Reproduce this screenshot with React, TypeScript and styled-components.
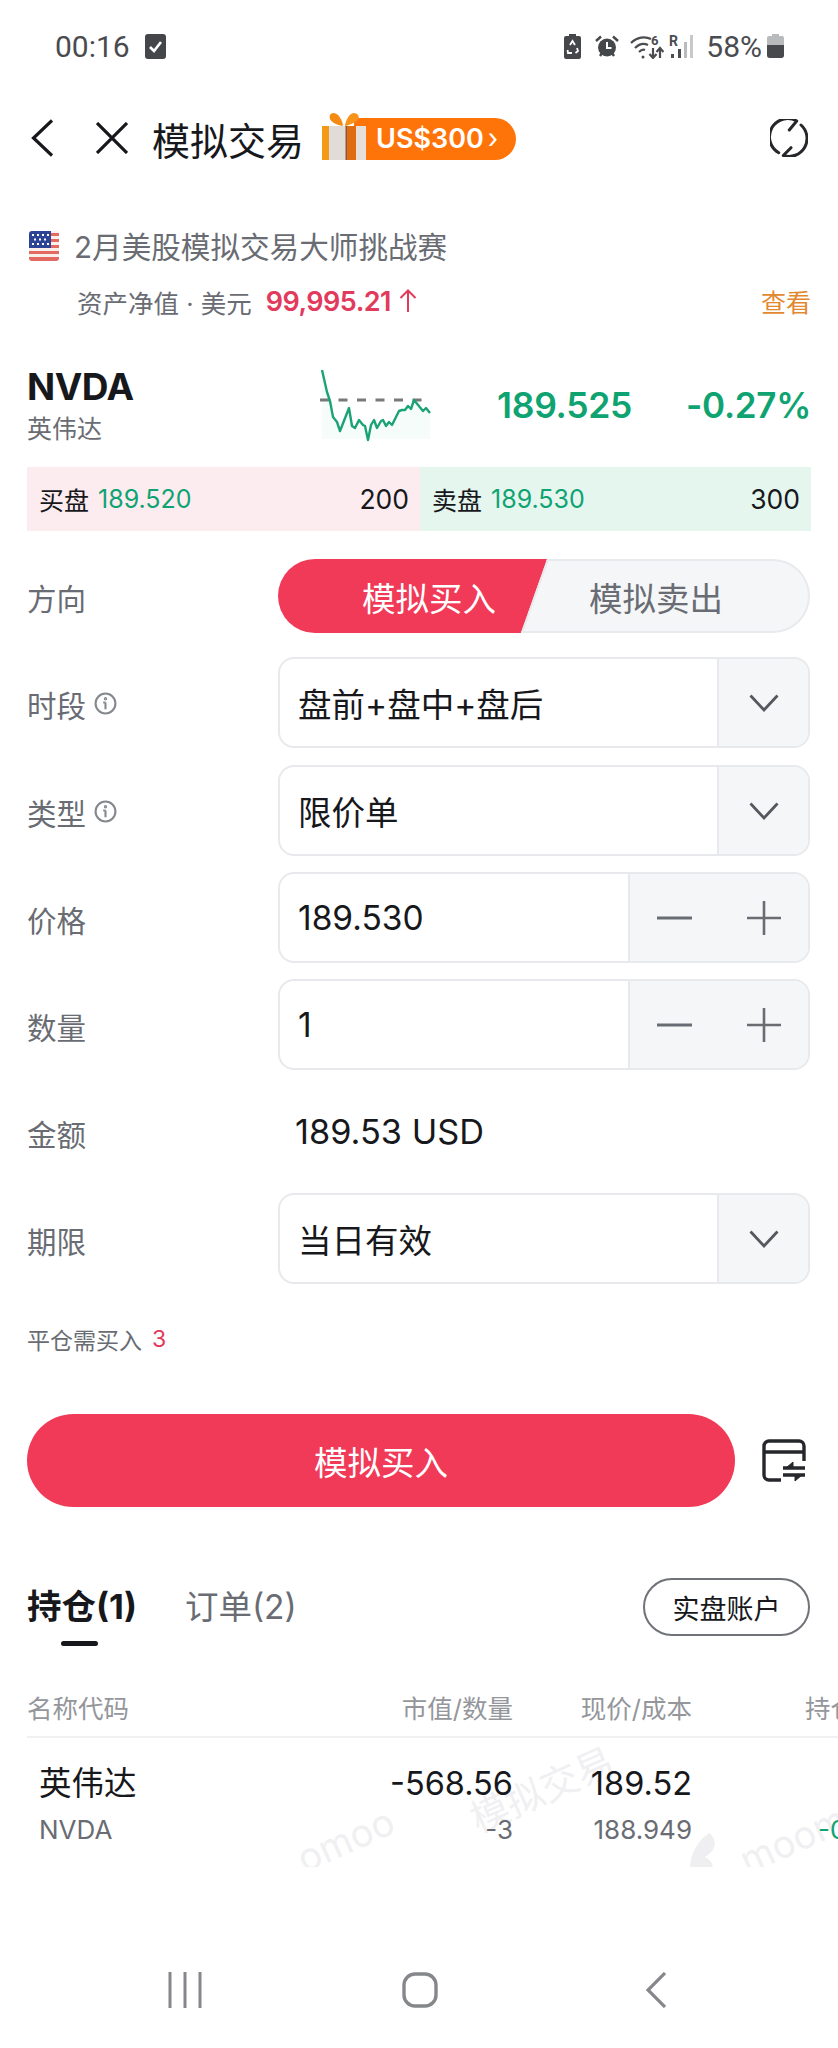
import React from "react";
import styled, { createGlobalStyle } from "styled-components";

const GlobalStyle = createGlobalStyle`
    html, body {
        margin: 0;
        padding: 0;
        background: #fff;
    }
    body {
        font-family: Inter, "Noto Sans CJK SC", sans-serif;
        color: #17181c;
    }
    * {
        box-sizing: border-box;
    }
`;

const RED = "#f03a58";
const GREEN = "#0fa372";
const GREY = "#696c73";

const Page = styled.div`
    position: relative;
    width: 838px;
    height: 2048px;
    overflow: hidden;
    background: #fff;
`;

const StatusBar = styled.div`
    height: 92px;
    padding: 0 54px 0 55px;
    display: flex;
    align-items: center;
    justify-content: space-between;
    color: #4a4b4f;
    font-family: Roboto, sans-serif;
    font-size: 30px;
`;

const StatusGroup = styled.div`
    display: flex;
    align-items: center;
`;

const StatusItem = styled.div<{ $left: number }>`
    margin-left: ${(p) => p.$left}px;
    display: flex;
    align-items: center;
`;

const NavBar = styled.div`
    height: 92px;
    padding: 0 30px 0 31px;
    display: flex;
    align-items: center;
`;

const NavTitle = styled.div`
    margin: 6px 0 0 24px;
    font-size: 38px;
    line-height: 50px;
`;

const Promo = styled.div`
    margin: -4px 0 0 18px;
    display: flex;
    align-items: flex-end;
    height: 48px;
`;

const PromoGift = styled.svg`
    position: relative;
    z-index: 1;
`;

const PromoPill = styled.div`
    margin-left: -12px;
    width: 162px;
    height: 42px;
    padding-left: 22px;
    border-radius: 0 21px 21px 0;
    background: #ff7409;
    color: #fff;
    font-size: 27px;
    font-weight: 600;
    line-height: 42px;
    white-space: nowrap;
`;

const PromoArrow = styled.span`
    margin-left: 4px;
    font-weight: 400;
`;

const NavSpacer = styled.div`
    flex: 1;
`;

const ContestRow = styled.div`
    height: 61px;
    margin-top: 31px;
    padding-left: 29px;
    display: flex;
    align-items: center;
    gap: 15px;
    color: ${GREY};
    font-size: 29.6px;
`;

const NetRow = styled.div`
    height: 50px;
    padding: 0 27px 0 77px;
    display: flex;
    align-items: center;
    color: ${GREY};
    font-size: 25.5px;
`;

const NetValue = styled.span`
    margin-left: 14px;
    color: #e23a5c;
    font-size: 27px;
    font-weight: 600;
    letter-spacing: -0.5px;
`;

const NetArrow = styled.svg`
    margin-left: 8px;
`;

const ViewLink = styled.span`
    margin-left: auto;
    color: #e2892f;
    font-size: 25px;
`;

const QuoteRow = styled.div`
    height: 110px;
    margin-top: 24px;
    padding: 0 27px;
    display: flex;
    align-items: center;
`;

const Ticker = styled.div`
    width: 293px;
`;

const TickerCode = styled.div`
    font-size: 37px;
    font-weight: 700;
    line-height: 44px;
    letter-spacing: -0.5px;
`;

const TickerName = styled.div`
    margin-top: 3px;
    color: ${GREY};
    font-size: 25px;
    line-height: 34px;
`;

const QuotePrice = styled.div`
    margin-left: 65px;
    color: ${GREEN};
    font-size: 35.5px;
    font-weight: 600;
    letter-spacing: -0.3px;
`;

const QuoteChange = styled.div`
    margin-left: auto;
    color: ${GREEN};
    font-size: 35px;
    font-weight: 600;
    letter-spacing: -0.3px;
`;

const BookRow = styled.div`
    height: 64px;
    margin: 7px 27px 0;
    display: grid;
    grid-template-columns: 393px 1fr;
`;

const BookSide = styled.div<{ $tint: string }>`
    padding: 0 11px 0 12px;
    display: flex;
    align-items: center;
    background: ${(p) => p.$tint};
    font-size: 25px;
`;

const BookPrice = styled.span`
    margin-left: 9px;
    color: ${GREEN};
`;

const BookSize = styled.span`
    margin-left: auto;
    font-size: 26.5px;
`;

const FormRow = styled.div<{ $top: number; $height?: number }>`
    height: ${(p) => p.$height ?? 91}px;
    margin-top: ${(p) => p.$top}px;
    padding: 0 28px 0 27px;
    display: grid;
    grid-template-columns: 251px 1fr;
    align-items: center;
`;

const FieldLabel = styled.div`
    padding-top: 2px;
    display: flex;
    align-items: center;
    gap: 8px;
    color: ${GREY};
    font-size: 29.5px;
`;

const Toggle = styled.div`
    display: flex;
    height: 74px;
    font-size: 33.5px;
`;

const BuyTab = styled.div`
    width: 275px;
    padding-left: 27px;
    display: flex;
    align-items: center;
    justify-content: center;
    border-radius: 37px 0 0 37px;
    background: ${RED};
    color: #fff;
    clip-path: polygon(0 0, 100% 0, calc(100% - 31px) 100%, 0 100%);
`;

const SellTab = styled.div`
    position: relative;
    flex: 1;
    margin-left: -6px;
    padding-right: 43px;
    display: flex;
    align-items: center;
    justify-content: center;
    border: 2px solid #e9eaed;
    border-left: none;
    border-radius: 0 37px 37px 0;
    background: #f5f6f8;
    color: ${GREY};

    &::before {
        content: "";
        position: absolute;
        top: -2px;
        bottom: -2px;
        left: -13px;
        width: 30px;
        border: 2px solid #e9eaed;
        border-right: none;
        background: #f5f6f8;
        transform: skewX(-19.5deg);
    }
`;

const SellText = styled.span`
    position: relative;
`;

const Field = styled.div`
    height: 91px;
    display: flex;
    border: 2px solid #e8e9ec;
    border-radius: 16px;
    overflow: hidden;
`;

const FieldValue = styled.div`
    flex: 1;
    padding-left: 18px;
    display: flex;
    align-items: center;
    font-size: 33.5px;
`;

const FieldAddon = styled.div<{ $width: number }>`
    width: ${(p) => p.$width}px;
    display: flex;
    align-items: center;
    justify-content: space-around;
    border-left: 2px solid #e8e9ec;
    background: #f5f6f8;
`;

const AmountText = styled.div`
    padding-left: 17px;
    font-size: 34.3px;
`;

const HintRow = styled.div`
    height: 40px;
    margin-top: 35px;
    padding-left: 27px;
    display: flex;
    align-items: center;
    gap: 10px;
    color: ${GREY};
    font-size: 23px;
`;

const HintCount = styled.span`
    color: #e23a5c;
`;

const SubmitRow = styled.div`
    margin-top: 55px;
    padding: 0 32px 0 27px;
    display: flex;
    align-items: center;
    justify-content: space-between;
`;

const SubmitButton = styled.div`
    width: 708px;
    height: 93px;
    display: flex;
    align-items: center;
    justify-content: center;
    border-radius: 47px;
    background: ${RED};
    color: #fff;
    font-size: 33.5px;
`;

const TabsRow = styled.div`
    height: 68px;
    margin-top: 66px;
    padding: 0 28px 0 27px;
    display: flex;
    align-items: center;
    justify-content: space-between;
`;

const Tabs = styled.div`
    display: flex;
    gap: 48px;
`;

const Tab = styled.div<{ $active?: boolean }>`
    position: relative;
    color: ${(p) => (p.$active ? "#17181c" : GREY)};
    font-size: ${(p) => (p.$active ? 34.5 : 33.5)}px;
    font-weight: ${(p) => (p.$active ? 700 : 400)};
    line-height: 46px;
    white-space: nowrap;
`;

const TabMark = styled.div`
    position: absolute;
    left: 34px;
    bottom: -16px;
    width: 37px;
    height: 5px;
    border-radius: 3px;
    background: #17181c;
`;

const OutlineButton = styled.div`
    width: 167px;
    height: 58px;
    display: flex;
    align-items: center;
    justify-content: center;
    border: 2px solid #6f7277;
    border-radius: 29px;
    font-size: 27px;
`;

const Table = styled.div`
    position: relative;
    height: 191px;
    margin-top: 35px;
    overflow: hidden;
`;

const TableGrid = styled.div`
    position: relative;
    z-index: 1;
    width: 900px;
    padding-left: 27px;
    display: grid;
    grid-template-columns: 260px 226px 179px 208px;
`;

const HeadCell = styled.div<{ $right?: boolean; $inset?: number }>`
    height: 62px;
    padding-left: ${(p) => p.$inset ?? 0}px;
    display: flex;
    align-items: center;
    justify-content: ${(p) => (p.$right ? "flex-end" : "flex-start")};
    border-bottom: 2px solid #f0f1f3;
    color: #94969b;
    font-size: 25.5px;
    white-space: nowrap;
`;

const BodyCell = styled.div<{ $right?: boolean; $inset?: number }>`
    padding-top: 23px;
    padding-left: ${(p) => p.$inset ?? 0}px;
    text-align: ${(p) => (p.$right ? "right" : "left")};
    white-space: nowrap;
`;

const MainLine = styled.div`
    height: 46px;
    font-size: 32.5px;
    line-height: 46px;
`;

const SubLine = styled.div<{ $green?: boolean }>`
    height: 46px;
    color: ${(p) => (p.$green ? GREEN : GREY)};
    font-size: 26px;
    line-height: 46px;
`;

const Watermark = styled.div<{ $x: number; $y: number; $size: number }>`
    position: absolute;
    left: ${(p) => p.$x}px;
    top: ${(p) => p.$y}px;
    color: #f0f0f2;
    font-size: ${(p) => p.$size}px;
    white-space: nowrap;
    transform: rotate(-24deg);
`;

const NavFooter = styled.div`
    position: absolute;
    left: 0;
    right: 0;
    bottom: 0;
    height: 112px;
    padding-bottom: 4px;
    display: grid;
    grid-template-columns: 168px 34px 200px 36px 208px 20px;
    align-items: center;
`;

const Back = () => (
    <svg width="22" height="38" viewBox="0 0 22 38" fill="none" stroke="#17181c" strokeWidth="3.2">
        <path d="M21 1.5 2.5 19 21 36.5" />
    </svg>
);

const Close = () => (
    <svg width="32" height="32" viewBox="0 0 32 32" fill="none" stroke="#17181c" strokeWidth="3.2" style={{ marginLeft: 43 }}>
        <path d="M1 1 31 31M31 1 1 31" />
    </svg>
);

const Refresh = () => (
    <svg width="38" height="38" viewBox="0 0 38 38" fill="none" stroke="#26272b" strokeWidth="3" strokeLinecap="round" strokeLinejoin="round">
        <path d="M8.700 33.700A18 18 0 0 1 26.700 2L19.300 11" />
        <path d="M31 6A18 18 0 0 1 13.300 36.500L21 28.700" />
    </svg>
);

const Gift = () => (
    <PromoGift width="44" height="48" viewBox="0 0 44 48">
        <path d="M20 14C12 12 6 8 8 3 10 -1 18 0 21 13Z" fill="#f58a12" />
        <path d="M23 14C31 12 39 8 36 3 33 -1 26 0 23 13Z" fill="#f7931a" />
        <rect x="0" y="14" width="44" height="34" fill="#f59a16" />
        <rect x="7" y="14" width="17" height="34" fill="#e2dcd9" />
        <rect x="24" y="14" width="10" height="34" fill="#dd6d10" />
        <rect x="34" y="14" width="10" height="34" fill="#e6dedb" />
        <rect x="23.500" y="14" width="1.500" height="34" fill="#8a5a36" />
    </PromoGift>
);

const Flag = () => (
    <svg width="30" height="30" viewBox="0 0 30 30">
        <rect width="30" height="30" rx="4" fill="#f8eeea" />
        <path d="M22 2h8v3h-8zM22 8h8v3h-8zM22 14h8v3h-8zM0 20h30v3H0zM0 26h30v1a3 3 0 0 1-3 3H3a3 3 0 0 1-3-3z" fill="#e26a60" />
        <path d="M3 0h19v17H0V3a3 3 0 0 1 3-3z" fill="#2d4395" />
        <path d="M3 4h2M8 4h2M13 4h2M18 4h2M5 8.500h2M10 8.500h2M15 8.500h2M3 13h2M8 13h2M13 13h2M18 13h2" stroke="#fff" strokeWidth="2" />
    </svg>
);

const linePoints = "2,3 7,25 10,34 13,50 17,55 20,64 29,41 32,59 35,61 39,53 43,58 45,59 48,73 51,58 54,53 57,61 61,54 63,53 66,59 69,55 72,58 79,44 82,43 85,43 88,39 91,42 94,33 103,44 106,41 110,46";

const Spark = () => (
    <svg width="112" height="76" viewBox="0 0 112 76" fill="none">
        <path d={`M${linePoints.replace(/ /g, " L")} L110,72 L2,72 Z`} fill="#f6fcf9" />
        <path d="M0 33H104" stroke="#77797c" strokeWidth="3" strokeDasharray="9 9.500" />
        <polyline points={linePoints} stroke="#1ba377" strokeWidth="2.4" strokeLinejoin="round" />
    </svg>
);

const Info = () => (
    <svg width="23" height="23" viewBox="0 0 22 22" fill="none" stroke="#85888d" strokeWidth="2">
        <circle cx="11" cy="11" r="9.500" />
        <path d="M11 10v6.500M8.800 10H11" />
        <circle cx="11" cy="6.500" r="0.600" />
    </svg>
);

const Chevron = () => (
    <svg width="30" height="18" viewBox="0 0 30 18" fill="none" stroke="#55585e" strokeWidth="2.8">
        <path d="M1.500 1.500 15 16 28.500 1.500" />
    </svg>
);

const Minus = () => (
    <svg width="35" height="4" viewBox="0 0 35 4" fill="none" stroke="#696c73" strokeWidth="3">
        <path d="M0 2H35" />
    </svg>
);

const Plus = () => (
    <svg width="34" height="34" viewBox="0 0 34 34" fill="none" stroke="#696c73" strokeWidth="2.6">
        <path d="M0 17H34M17 0V34" />
    </svg>
);

const Stepper = () => (
    <FieldAddon $width={180}>
        <Minus />
        <Plus />
    </FieldAddon>
);

const SelectArrow = () => (
    <FieldAddon $width={91}>
        <Chevron />
    </FieldAddon>
);

const OrderSwap = () => (
    <svg width="44" height="43" viewBox="0 0 44 43" fill="none" stroke="#25272b" strokeWidth="3.4">
        <path d="M19 41H7a5 5 0 0 1-5-5V7a5 5 0 0 1 5-5h30a5 5 0 0 1 5 5v15" />
        <path d="M2 13H42" />
        <path d="M21 29H43M21 36H43" />
        <path d="M31 23 24 29H31ZM33 42 40 36H33Z" fill="#25272b" strokeWidth="1" />
    </svg>
);

const StatusCheck = () => (
    <svg width="21" height="25" viewBox="0 0 21 25">
        <rect width="21" height="25" rx="3" fill="#44464a" />
        <path d="M5 13 9 17 16 8" fill="none" stroke="#fff" strokeWidth="2.6" />
    </svg>
);

const StatusRecycle = () => (
    <svg width="17" height="25" viewBox="0 0 17 25">
        <path d="M5 0h7v2h3a2 2 0 0 1 2 2v19a2 2 0 0 1-2 2H2a2 2 0 0 1-2-2V4a2 2 0 0 1 2-2h3z" fill="#45474b" />
        <path d="M6 11 8.500 7 11 11M13 14l1 3-2.500 2M8 19H4L3.500 16" stroke="#fff" strokeWidth="1.800" fill="none" />
    </svg>
);

const StatusAlarm = () => (
    <svg width="24" height="23" viewBox="0 0 24 23">
        <circle cx="12" cy="12.500" r="9" fill="#45474b" />
        <path d="M1 6 6 1.500M23 6 18 1.500M5 21l2-3M19 21l-2-3" stroke="#45474b" strokeWidth="2.4" />
        <path d="M12 7v6h4.500" stroke="#fff" strokeWidth="2" fill="none" />
    </svg>
);

const StatusWifi = () => (
    <svg width="34" height="25" viewBox="0 0 34 25" fill="none" stroke="#4a4c50" strokeWidth="2.2">
        <path d="M1 9C7 3 15 2 21 5M5 14C9 10 14 9 18 11M9 18C11 16 13 15 15 16" />
        <circle cx="13" cy="23" r="1.500" fill="#4a4c50" stroke="none" />
        <text x="21" y="11" fontSize="13" fontWeight="700" fill="#4a4c50" stroke="none" fontFamily="Roboto, sans-serif">6</text>
        <path d="M23 14V24M19.500 20 23 24 26.500 20M30 24V14M26.500 18 30 14 33.500 18" />
    </svg>
);

const StatusSignal = () => (
    <svg width="24" height="25" viewBox="0 0 24 25">
        <text x="0" y="12" fontSize="14" fontWeight="700" fill="#4a4c50" fontFamily="Roboto, sans-serif">R</text>
        <rect x="2" y="20" width="3" height="4" fill="#4a4c50" />
        <rect x="9" y="15" width="3" height="9" fill="#4a4c50" />
        <rect x="15" y="8" width="3" height="16" fill="#b9bbbd" />
        <rect x="21" y="1" width="3" height="23" fill="#c6c8ca" />
    </svg>
);

const StatusBattery = () => (
    <svg width="17" height="24" viewBox="0 0 17 24">
        <path d="M5 0h7v2h3a2 2 0 0 1 2 2v17a3 3 0 0 1-3 3H3a3 3 0 0 1-3-3V4a2 2 0 0 1 2-2h3z" fill="#b9babc" />
        <path d="M0 11h17v10a3 3 0 0 1-3 3H3a3 3 0 0 1-3-3z" fill="#47494d" />
    </svg>
);

const FooterBars = () => (
    <svg width="34" height="36" viewBox="0 0 34 36" fill="none" stroke="#85878b" strokeWidth="3">
        <path d="M2 0V36M17 0V36M32 0V36" />
    </svg>
);

const FooterHome = () => (
    <svg width="36" height="36" viewBox="0 0 36 36" fill="none" stroke="#85878b" strokeWidth="3.4">
        <rect x="2" y="2" width="32" height="32" rx="11" />
    </svg>
);

const FooterBack = () => (
    <svg width="20" height="36" viewBox="0 0 20 36" fill="none" stroke="#85878b" strokeWidth="3.2">
        <path d="M19 1 2 18 19 35" />
    </svg>
);

const MoomooMark = () => (
    <svg width="44" height="40" viewBox="0 0 44 40">
        <path d="M2 38C6 18 22 4 38 2 44 14 34 22 24 22 30 28 28 34 26 38Z" fill="#efeff1" />
    </svg>
);

const App = () => {
    return (
        <Page>
            <GlobalStyle />
            <StatusBar>
                <StatusGroup>
                    <span>00:16</span>
                    <StatusItem $left={15}>
                        <StatusCheck />
                    </StatusItem>
                </StatusGroup>
                <StatusGroup>
                    <StatusRecycle />
                    <StatusItem $left={14}>
                        <StatusAlarm />
                    </StatusItem>
                    <StatusItem $left={11}>
                        <StatusWifi />
                    </StatusItem>
                    <StatusItem $left={5}>
                        <StatusSignal />
                    </StatusItem>
                    <StatusItem $left={13}>58%</StatusItem>
                    <StatusItem $left={5}>
                        <StatusBattery />
                    </StatusItem>
                </StatusGroup>
            </StatusBar>

            <NavBar>
                <Back />
                <Close />
                <NavTitle>模拟交易</NavTitle>
                <Promo>
                    <Gift />
                    <PromoPill>
                        US$300<PromoArrow>›</PromoArrow>
                    </PromoPill>
                </Promo>
                <NavSpacer />
                <Refresh />
            </NavBar>

            <ContestRow>
                <Flag />
                <span>2月美股模拟交易大师挑战赛</span>
            </ContestRow>
            <NetRow>
                <span>资产净值 · 美元</span>
                <NetValue>99,995.21</NetValue>
                <NetArrow width="18" height="24" viewBox="0 0 18 24" fill="none" stroke="#e23a5c" strokeWidth="2">
                    <path d="M9 23V2M1.500 9 9 1.500 16.500 9" />
                </NetArrow>
                <ViewLink>查看</ViewLink>
            </NetRow>

            <QuoteRow>
                <Ticker>
                    <TickerCode>NVDA</TickerCode>
                    <TickerName>英伟达</TickerName>
                </Ticker>
                <Spark />
                <QuotePrice>189.525</QuotePrice>
                <QuoteChange>-0.27%</QuoteChange>
            </QuoteRow>

            <BookRow>
                <BookSide $tint="#fdecef">
                    <span>买盘</span>
                    <BookPrice>189.520</BookPrice>
                    <BookSize>200</BookSize>
                </BookSide>
                <BookSide $tint="#e5f6ef">
                    <span>卖盘</span>
                    <BookPrice>189.530</BookPrice>
                    <BookSize>300</BookSize>
                </BookSide>
            </BookRow>

            <FormRow $top={28} $height={74}>
                <FieldLabel>方向</FieldLabel>
                <Toggle>
                    <BuyTab>模拟买入</BuyTab>
                    <SellTab>
                        <SellText>模拟卖出</SellText>
                    </SellTab>
                </Toggle>
            </FormRow>

            <FormRow $top={24}>
                <FieldLabel>
                    时段 <Info />
                </FieldLabel>
                <Field>
                    <FieldValue>盘前+盘中+盘后</FieldValue>
                    <SelectArrow />
                </Field>
            </FormRow>

            <FormRow $top={17}>
                <FieldLabel>
                    类型 <Info />
                </FieldLabel>
                <Field>
                    <FieldValue>限价单</FieldValue>
                    <SelectArrow />
                </Field>
            </FormRow>

            <FormRow $top={16}>
                <FieldLabel>价格</FieldLabel>
                <Field>
                    <FieldValue>189.530</FieldValue>
                    <Stepper />
                </Field>
            </FormRow>

            <FormRow $top={16}>
                <FieldLabel>数量</FieldLabel>
                <Field>
                    <FieldValue>1</FieldValue>
                    <Stepper />
                </Field>
            </FormRow>

            <FormRow $top={16}>
                <FieldLabel>金额</FieldLabel>
                <AmountText>189.53 USD</AmountText>
            </FormRow>

            <FormRow $top={16}>
                <FieldLabel>期限</FieldLabel>
                <Field>
                    <FieldValue>当日有效</FieldValue>
                    <SelectArrow />
                </Field>
            </FormRow>

            <HintRow>
                <span>平仓需买入</span>
                <HintCount>3</HintCount>
            </HintRow>

            <SubmitRow>
                <SubmitButton>模拟买入</SubmitButton>
                <OrderSwap />
            </SubmitRow>

            <TabsRow>
                <Tabs>
                    <Tab $active>
                        持仓(1)
                        <TabMark />
                    </Tab>
                    <Tab>订单(2)</Tab>
                </Tabs>
                <OutlineButton>实盘账户</OutlineButton>
            </TabsRow>

            <Table>
                <TableGrid>
                    <HeadCell>名称代码</HeadCell>
                    <HeadCell $right>市值/数量</HeadCell>
                    <HeadCell $right>现价/成本</HeadCell>
                    <HeadCell $inset={113}>持仓盈亏</HeadCell>
                    <BodyCell $inset={12}>
                        <MainLine>英伟达</MainLine>
                        <SubLine>NVDA</SubLine>
                    </BodyCell>
                    <BodyCell $right>
                        <MainLine>-568.56</MainLine>
                        <SubLine>-3</SubLine>
                    </BodyCell>
                    <BodyCell $right>
                        <MainLine>189.52</MainLine>
                        <SubLine>188.949</SubLine>
                    </BodyCell>
                    <BodyCell $inset={126}>
                        <MainLine />
                        <SubLine $green>-0.30%</SubLine>
                    </BodyCell>
                </TableGrid>
                <Watermark $x={465} $y={84} $size={38}>模拟交易</Watermark>
                <Watermark $x={278} $y={144} $size={38}>_omoo</Watermark>
                <Watermark $x={735} $y={131} $size={38}>moomoo</Watermark>
                <Watermark $x={680} $y={160} $size={0}>
                    <MoomooMark />
                </Watermark>
            </Table>

            <NavFooter>
                <span />
                <FooterBars />
                <span />
                <FooterHome />
                <span />
                <FooterBack />
            </NavFooter>
        </Page>
    );
};

export default App;
